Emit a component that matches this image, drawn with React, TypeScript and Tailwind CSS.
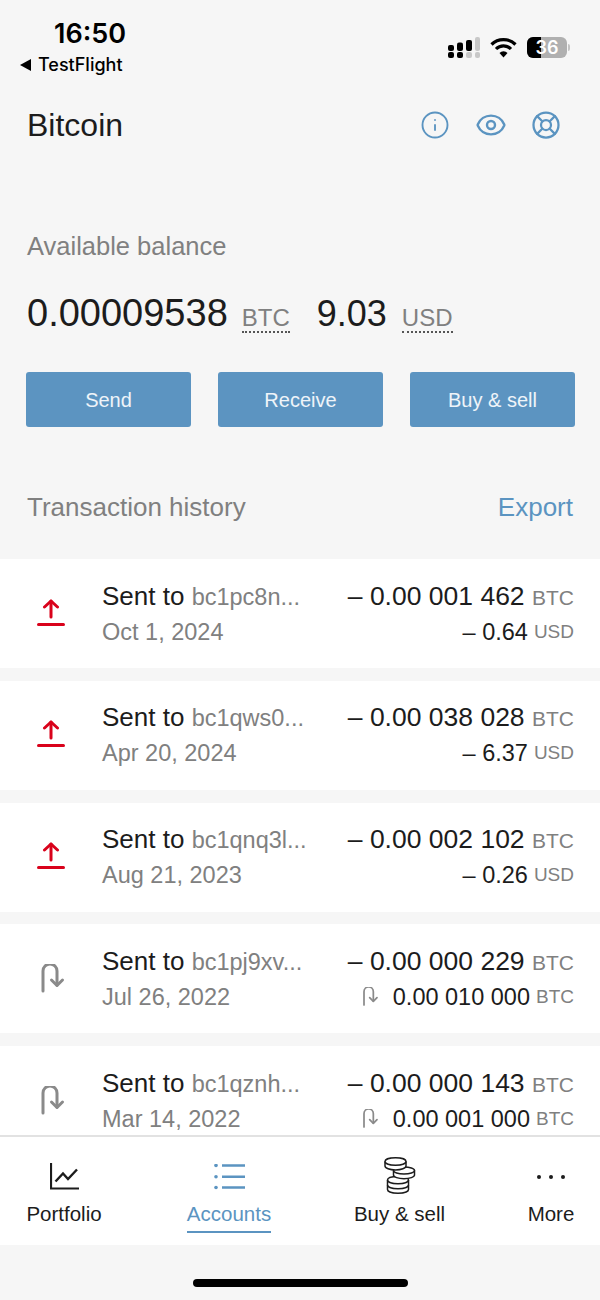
import { Eye, Info, LifeBuoy } from 'lucide-react'

const txs = [
  { kind: 'sent', addr: 'bc1pc8n...', date: 'Oct 1, 2024', amount: '– 0.00 001 462', sub: '– 0.64', subUnit: 'USD' },
  { kind: 'sent', addr: 'bc1qws0...', date: 'Apr 20, 2024', amount: '– 0.00 038 028', sub: '– 6.37', subUnit: 'USD' },
  { kind: 'sent', addr: 'bc1qnq3l...', date: 'Aug 21, 2023', amount: '– 0.00 002 102', sub: '– 0.26', subUnit: 'USD' },
  { kind: 'return', addr: 'bc1pj9xv...', date: 'Jul 26, 2022', amount: '– 0.00 000 229', sub: '0.00 010 000', subUnit: 'BTC' },
  { kind: 'return', addr: 'bc1qznh...', date: 'Mar 14, 2022', amount: '– 0.00 000 143', sub: '0.00 001 000', subUnit: 'BTC' },
]

function SentIcon() {
  return (
    <svg width="30" height="30" viewBox="0 0 30 30" fill="none" stroke="#d9021b" strokeWidth="3" strokeLinecap="round" strokeLinejoin="round">
      <path d="M1.500 25.500h25" />
      <path d="M14 18V2" />
      <path d="M7.500 8 14 2l6.500 6" />
    </svg>
  )
}

function ReturnIcon({ size = 30, width = 3 }: { size?: number; width?: number }) {
  return (
    <svg width={size} height={size} viewBox="0 0 30 30" fill="none" stroke="#8a8a8a" strokeWidth={width} strokeLinecap="round" strokeLinejoin="round">
      <path d="M6 27V7a7 7 0 0 1 14 0v14" />
      <path d="M14.500 16 20 21.500 25.500 16" />
    </svg>
  )
}

function StatusIcons() {
  return (
    <div className="flex items-center">
      <svg width="32" height="21" viewBox="0 0 32 21" className="mr-[10px]">
        <rect x="0" y="8" width="6" height="6" rx="2" fill="#000" />
        <rect x="9" y="5.500" width="6" height="8.500" rx="2" fill="#000" />
        <rect x="18" y="3" width="6" height="11" rx="2" fill="#000" />
        <rect x="27" y="0" width="5" height="14" rx="2" fill="#c8c8c8" />
        <rect x="0" y="15" width="6" height="6" rx="2" fill="#000" />
        <rect x="9" y="15" width="6" height="6" rx="2" fill="#000" />
        <rect x="18" y="15" width="6" height="6" rx="2" fill="#c8c8c8" />
        <rect x="27" y="15" width="5" height="6" rx="2" fill="#c8c8c8" />
      </svg>
      <svg width="27" height="21" viewBox="0 0 27 21" fill="none" stroke="#000" strokeWidth="3.200" className="mr-[10px]">
        <path d="M1.500 7.500a17 17 0 0 1 24 0" />
        <path d="M6 12a10.500 10.500 0 0 1 15 0" />
        <path d="M13.500 20.500 9.500 16a5.500 5.500 0 0 1 8 0z" fill="#000" stroke="none" />
      </svg>
      <div className="relative flex h-[21px] w-[40px] items-center justify-center overflow-hidden rounded-[6px] bg-[#b0b0b0] text-[18px] font-semibold text-white">
        <div className="absolute inset-y-0 left-0 w-[14px] bg-black" />
        <span className="relative">36</span>
      </div>
      <div className="ml-[1px] h-[7px] w-[2px] rounded-r bg-[#c4c4c4]" />
    </div>
  )
}

function CoinsIcon() {
  return (
    <svg width="32" height="37" viewBox="0 0 32 37" fill="none" stroke="#1c1c1c" strokeWidth="1.500">
      <path d="M3.500 23c0-2.200 4.700-3.500 10.500-3.500s10.500 1.300 10.500 3.500v9.500c0 2.200-4.700 3.700-10.500 3.700S3.500 34.700 3.500 32.500z" fill="#fff" />
      <path d="M3.500 23c0 2.200 4.700 3.700 10.500 3.700s10.500-1.500 10.500-3.700" />
      <path d="M3.500 28c0 2.200 4.700 3.700 10.500 3.700s10.500-1.500 10.500-3.700" />
      <path d="M9.500 13.500c0-2 4.700-3.500 10.500-3.500s10.500 1.500 10.500 3.500V18c0 2-4.700 3.700-10.500 3.700S9.500 20 9.500 18z" fill="#fff" />
      <path d="M9.500 13.500c0 2 4.700 3.500 10.500 3.500s10.500-1.500 10.500-3.500" />
      <path d="M1 4.500C1 2.300 5.700.8 11.500.8S22 2.300 22 4.500V9c0 2.200-4.700 4-10.500 4S1 11.200 1 9z" fill="#fff" />
      <path d="M1 4.500c0 2.200 4.700 3.700 10.500 3.700S22 6.700 22 4.500" />
    </svg>
  )
}

function Row({ tx }: { tx: (typeof txs)[number] }) {
  return (
    <div className="flex h-[109px] shrink-0 items-center bg-white pl-[37px] pr-[26px]">
      <div className="w-[65px] shrink-0">
        {tx.kind === 'sent' ? <SentIcon /> : <ReturnIcon />}
      </div>
      <div className="flex-1">
        <div className="h-[34px] text-[26px] leading-[34px] whitespace-nowrap text-[#1c1c1c]">
          Sent to <span className="text-[23.500px] text-[#808080]">{tx.addr}</span>
        </div>
        <div className="mt-[2px] text-[23.500px] leading-[34px] text-[#808080]">{tx.date}</div>
      </div>
      <div className="flex flex-col items-end">
        <div className="h-[34px] text-[26.500px] leading-[34px] whitespace-nowrap text-[#1c1c1c]">
          {tx.amount} <span className="text-[21px] text-[#808080]">BTC</span>
        </div>
        <div className="mt-[2px] flex items-center text-[23.500px] leading-[34px] whitespace-nowrap text-[#1c1c1c]">
          {tx.kind === 'return' && (
            <span className="mr-[13px]"><ReturnIcon size={20} width={2.600} /></span>
          )}
          {tx.sub}
          <span className="ml-[6px] text-[19px] text-[#808080]">{tx.subUnit}</span>
        </div>
      </div>
    </div>
  )
}

export default function App() {
  return (
    <div className="flex h-[1300px] w-[600px] flex-col overflow-hidden bg-[#f6f6f6] font-['Liberation_Sans',sans-serif]">
      <div className="flex h-[90px] shrink-0 justify-between pl-[20px] pr-[30px] font-['Inter',sans-serif]">
        <div>
          <div className="mt-[17px] pl-[34px] text-[27px] font-semibold leading-[34px] text-black">16:50</div>
          <div className="mt-[1px] flex items-center text-[18px] font-medium leading-[26px] text-black">
            <span className="mr-[7px] h-0 w-0 border-y-[6px] border-r-[11px] border-y-transparent border-r-black" />
            TestFlight
          </div>
        </div>
        <div className="mt-[37px] self-start"><StatusIcons /></div>
      </div>

      <div className="flex h-[70px] shrink-0 items-center justify-between pl-[27px] pr-[39px]">
        <div className="text-[32px] text-[#1c1c1c]">Bitcoin</div>
        <div className="flex items-center text-[#5b94c1]">
          <Info size={30} strokeWidth={1.500} />
          <Eye size={32} strokeWidth={1.800} className="ml-[25px]" />
          <LifeBuoy size={30} strokeWidth={1.800} className="ml-[24px]" />
        </div>
      </div>

      <div className="mt-[69px] px-[27px] text-[25.500px] leading-[34px] text-[#808080]">Available balance</div>

      <div className="mt-[28px] flex h-[44px] items-baseline pl-[27px]">
        <span className="text-[38px] leading-[44px] text-[#1c1c1c]">0.00009538</span>
        <span className="ml-[14px] border-b-2 border-dotted border-[#555] text-[24px] leading-[26px] text-[#808080]">BTC</span>
        <span className="ml-[27px] text-[36px] leading-[44px] text-[#1c1c1c]">9.03</span>
        <span className="ml-[15px] border-b-2 border-dotted border-[#555] text-[24px] leading-[26px] text-[#808080]">USD</span>
      </div>

      <div className="mt-[37px] grid grid-cols-3 gap-[27px] pl-[26px] pr-[25px]">
        {['Send', 'Receive', 'Buy & sell'].map(label => (
          <button key={label} className="h-[55px] rounded-[3px] bg-[#5c94c1] text-[20px] text-white/90">{label}</button>
        ))}
      </div>

      <div className="mt-[63px] flex items-center justify-between pl-[27px] pr-[27px] text-[26px] leading-[34px]">
        <span className="text-[#808080]">Transaction history</span>
        <span className="text-[#5b94c1]">Export</span>
      </div>

      <div className="mt-[35px] flex min-h-0 flex-1 flex-col gap-[12.750px] overflow-hidden">
        {txs.map(tx => <Row key={tx.addr} tx={tx} />)}
      </div>

      <div className="flex h-[110px] shrink-0 border-t-[2px] border-[#e2e2e2] bg-white text-[20.500px] text-[#1c1c1c]">
        <div className="flex w-[128px] flex-col items-center pt-[26px]">
          <svg width="29" height="27" viewBox="0 0 29 27" fill="none" stroke="#1c1c1c">
            <path d="M1 0v25.500h28" strokeWidth="2.200" />
            <path d="M5.500 18.500 13 10.500l5 5.500 9-9.500" strokeWidth="2.400" />
          </svg>
          <span className="mt-[10px] leading-[28px]">Portfolio</span>
        </div>
        <div className="flex w-[202px] flex-col items-center pt-[27px] text-[#5b94c1]">
          <svg width="31" height="26" viewBox="0 0 31 26" fill="none" stroke="#5b94c1" strokeWidth="2.600">
            <path d="M8 1.500h23M8 12.700h23M8 23.500h23" />
            <circle cx="2" cy="1.500" r="1.800" fill="#5b94c1" stroke="none" />
            <circle cx="2" cy="12.700" r="1.800" fill="#5b94c1" stroke="none" />
            <circle cx="2" cy="23.500" r="1.800" fill="#5b94c1" stroke="none" />
          </svg>
          <span className="mt-[10px] border-b-[2px] border-[#5b94c1] pb-[3px] leading-[28px]">Accounts</span>
        </div>
        <div className="flex w-[139px] flex-col items-center pt-[20px]">
          <CoinsIcon />
          <span className="mt-[6px] leading-[28px]">Buy & sell</span>
        </div>
        <div className="flex flex-1 flex-col items-center pl-[33px] pt-[26px]">
          <div className="flex h-[27px] items-center gap-[8px]">
            <span className="h-[4px] w-[4px] rounded-full bg-[#1c1c1c]" />
            <span className="h-[4px] w-[4px] rounded-full bg-[#1c1c1c]" />
            <span className="h-[4px] w-[4px] rounded-full bg-[#1c1c1c]" />
          </div>
          <span className="mt-[10px] leading-[28px]">More</span>
        </div>
      </div>

      <div className="flex h-[55px] shrink-0 items-end justify-center pb-[13px]">
        <div className="h-[8px] w-[215px] rounded-full bg-black" />
      </div>
    </div>
  )
}
